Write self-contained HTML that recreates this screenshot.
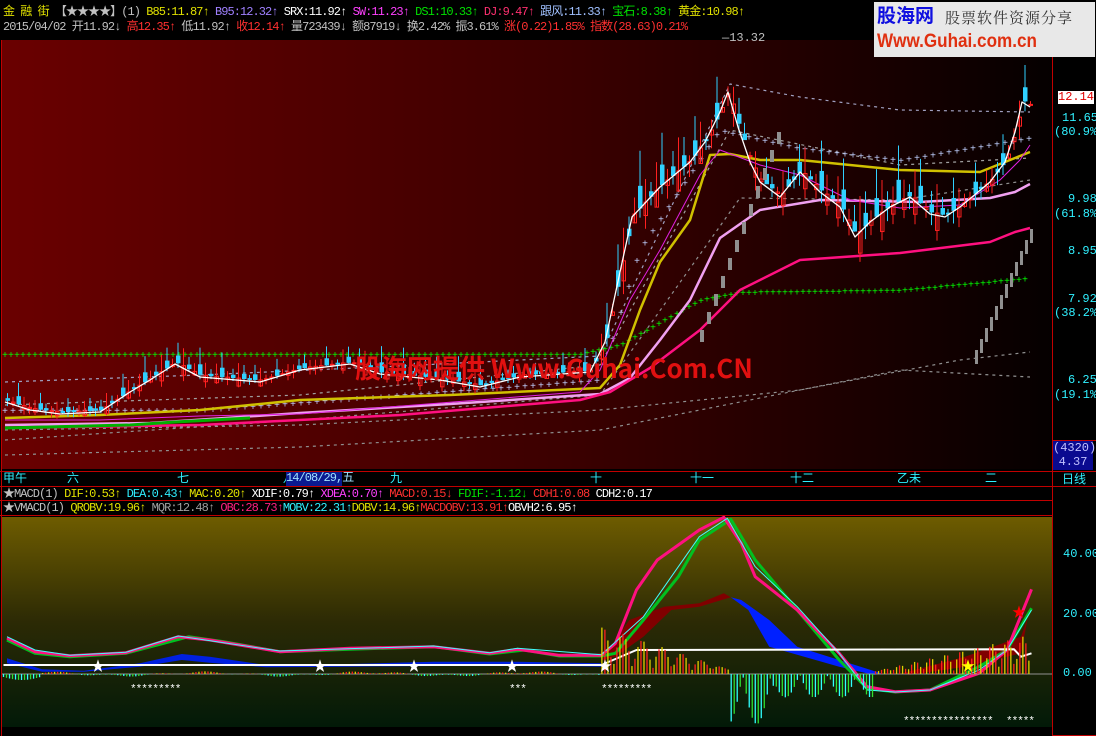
<!DOCTYPE html>
<html><head><meta charset="utf-8"><style>
*{margin:0;padding:0}
body{width:1096px;height:736px;background:#000;position:relative;overflow:hidden;font-family:"Liberation Mono","Noto Sans CJK SC",monospace;font-size:12px;color:#c0c0c0}
.t{position:absolute;white-space:nowrap;line-height:13px}
.h{letter-spacing:-0.95px}
.y{color:#e0e000}.b{color:#a080ff}.w{color:#fff}.m{color:#ff40ff}.g{color:#00e000}.r{color:#ff3030}.c{color:#30f0ff}.gr{color:#a0a0a0}.lb{color:#a0c0ff}
</style></head><body>
<div class="t h" style="left:3px;top:6px"><span class="y">金 融 街</span> 【★★★★】(1) <span class="y">B85:11.87↑</span> <span class="b">B95:12.32↑</span> <span class="w">SRX:11.92↑</span> <span class="m">SW:11.23↑</span> <span class="g">DS1:10.33↑</span> <span class="m" style="color:#ff3070">DJ:9.47↑</span> <span class="lb">跟风:11.33↑</span> <span class="g">宝石:8.38↑</span> <span class="y">黄金:10.98↑</span></div>
<div class="t h" style="left:3px;top:21px">2015/04/02 开11.92↓ <span class="r">高12.35↑</span> 低11.92↑ <span class="r">收12.14↑</span> 量723439↓ 额87919↓ 换2.42% 振3.61% <span class="r">涨(0.22)1.85% 指数(28.63)0.21%</span></div>

<svg width="1096" height="736" style="position:absolute;left:0;top:0" id="s">
<defs>
<linearGradient id="gm" x1="0" x2="1" y1="0" y2="0"><stop offset="0" stop-color="#6a0000"/><stop offset="0.55" stop-color="#3a0000"/><stop offset="1" stop-color="#050000"/></linearGradient>
<linearGradient id="gl" x1="0" x2="0" y1="0" y2="1"><stop offset="0" stop-color="#6e5c00"/><stop offset="0.5" stop-color="#2c2a05"/><stop offset="1" stop-color="#021a08"/></linearGradient>
</defs>
<rect x="2" y="40" width="1050" height="429" fill="url(#gm)"/>
<rect x="2" y="517" width="1050" height="210" fill="url(#gl)"/>
<g stroke="#c00000" stroke-width="1" fill="none">
<line x1="1052.5" y1="38" x2="1052.5" y2="736"/>
<line x1="0" y1="471.5" x2="1096" y2="471.5"/>
<line x1="0" y1="486.5" x2="1096" y2="486.5"/>
<line x1="1.5" y1="40" x2="1.5" y2="736"/>
<line x1="0" y1="500.5" x2="1052" y2="500.5"/>
<line x1="0" y1="515.5" x2="1052" y2="515.5"/>
<line x1="1052" y1="440.5" x2="1096" y2="440.5"/>
<line x1="1052" y1="735.5" x2="1096" y2="735.5"/>
</g>
<g id="main"></g>
<g id="low"></g>
</svg>

<div style="position:absolute;left:874px;top:2px;width:221px;height:55px;background:#e8e8e8"></div>
<div class="t" style="left:877px;top:6px;font-family:'Liberation Sans','Noto Sans CJK SC',sans-serif;font-weight:bold;font-size:19px;line-height:22px;color:#1010e0">股海网</div>
<div class="t" style="left:945px;top:9px;font-family:'Noto Serif CJK SC',serif;font-size:15px;line-height:18px;color:#333;letter-spacing:1px">股票软件资源分享</div>
<div class="t" style="left:877px;top:31px;font-family:'Liberation Sans',sans-serif;font-weight:bold;font-size:19px;line-height:22px;color:#e03010;transform:scaleX(0.9);transform-origin:0 0">Www.Guhai.com.cn</div>

<div class="t" style="left:355px;top:352px;font-family:'Noto Sans CJK SC',sans-serif;font-size:26px;line-height:32px;color:#e01010;font-weight:bold">股海网提供 Www.Guhai.Com.CN</div>
<div class="t" style="left:722px;top:32px;color:#c0c0c0">—13.32</div>

<div class="t c" style="left:3px;top:473px">甲午</div>
<div class="t c" style="left:67px;top:473px">六</div>
<div class="t c" style="left:177px;top:473px">七</div>
<div class="t c" style="left:283px;top:473px">八</div>
<div class="t h" style="left:286px;top:472px;width:56px;height:14px;background:#0a1a90;color:#a0e0ff">14/08/29,五</div>
<div class="t c" style="left:390px;top:473px">九</div>
<div class="t c" style="left:590px;top:473px">十</div>
<div class="t c" style="left:690px;top:473px">十一</div>
<div class="t c" style="left:790px;top:473px">十二</div>
<div class="t c" style="left:897px;top:473px">乙未</div>
<div class="t c" style="left:985px;top:473px">二</div>

<div class="t h" style="left:3px;top:488px">★MACD(1) <span class="y">DIF:0.53↑</span> <span class="c">DEA:0.43↑</span> <span class="y">MAC:0.20↑</span> <span class="w">XDIF:0.79↑</span> <span class="m">XDEA:0.70↑</span> <span class="r">MACD:0.15↓</span> <span class="g">FDIF:-1.12↓</span> <span class="r">CDH1:0.08</span> <span class="w">CDH2:0.17</span></div>
<div class="t h" style="left:3px;top:502px">★VMACD(1) <span class="y">QROBV:19.96↑</span> <span class="gr">MQR:12.48↑</span> <span style="color:#ff2080">OBC:28.73↑</span><span class="c">MOBV:22.31↑</span><span class="y">DOBV:14.96↑</span><span class="r">MACDOBV:13.91↑</span><span class="w">OBVH2:6.95↑</span></div>

<div style="position:absolute;left:1058px;top:91px;width:36px;height:13px;background:#fff;color:#e00000;line-height:13px;text-align:right">12.14</div>
<div class="t c" style="left:1062px;top:112px">11.65</div><div class="t c" style="left:1054px;top:126px">(80.9%)</div>
<div class="t c" style="left:1068px;top:193px">9.98</div><div class="t c" style="left:1054px;top:208px">(61.8%)</div>
<div class="t c" style="left:1068px;top:245px">8.95</div>
<div class="t c" style="left:1068px;top:293px">7.92</div><div class="t c" style="left:1054px;top:307px">(38.2%)</div>
<div class="t c" style="left:1068px;top:374px">6.25</div><div class="t c" style="left:1054px;top:389px">(19.1%)</div>
<div style="position:absolute;left:1053px;top:441px;width:40px;height:29px;background:#0a0a90;color:#c0c0ff;line-height:14px;text-align:center">(4320)<br>4.37</div>
<div class="t c" style="left:1062px;top:474px">日线</div>
<div class="t c" style="left:1063px;top:548px">40.00</div>
<div class="t c" style="left:1063px;top:608px">20.00</div>
<div class="t c" style="left:1063px;top:667px">0.00</div>

<script>
const NS="http://www.w3.org/2000/svg";
function el(p,t,a){const e=document.createElementNS(NS,t);for(const k in a)e.setAttribute(k,a[k]);p.appendChild(e);return e}
const M=document.getElementById('main'),L=document.getElementById('low');
function interp(pts,x){for(let i=0;i<pts.length-1;i++){if(x>=pts[i][0]&&x<=pts[i+1][0]){const t=(x-pts[i][0])/(pts[i+1][0]-pts[i][0]);return pts[i][1]+t*(pts[i+1][1]-pts[i][1])}}return pts[pts.length-1][1]}
function pl(g,pts,c,w,dash){el(g,'polyline',{points:pts.map(p=>p.join(',')).join(' '),fill:'none',stroke:c,'stroke-width':w,'stroke-dasharray':dash||'','stroke-linejoin':'round'})}
function dots(g,pts,c,x0,x1,st){for(let x=x0;x<=x1;x+=st){const y=interp(pts,x);el(g,'text',{x:x-3,y:y+4,fill:c,'font-size':'10','font-family':'Liberation Mono'}).textContent='+'}}
const P=[[5,400],[30,408],[60,412],[100,410],[130,390],[150,378],[175,362],[200,375],[260,380],[300,368],[350,362],[380,372],[440,378],[480,385],[520,375],[590,370],[605,340],[620,270],[632,215],[660,185],[690,160],[705,140],[720,110],[728,90],[738,125],[750,160],[760,180],[780,195],[800,170],[820,190],[840,205],[855,235],[870,220],[890,205],[910,195],[930,212],[945,215],[960,205],[990,180],[1005,160],[1015,130],[1022,100],[1030,105]];
pl(M,[[5,382],[200,375],[400,366],[600,356],[730,84],[800,97],[900,110],[1030,112]],'#a0a0c0',1.2,'3,4');
pl(M,[[5,405],[300,395],[600,365],[730,130],[900,165],[1030,158]],'#a0a0a0',1.2,'3,4');
pl(M,[[5,440],[300,420],[600,395],[740,198],[900,200],[1030,180]],'#909090',1.2,'3,4');
pl(M,[[5,455],[300,447],[600,430],[900,370],[1030,377]],'#909090',1.2,'3,4');
pl(M,[[5,430],[300,425],[600,410],[800,390],[960,360],[1030,352]],'#909090',1.2,'3,4');
dots(M,[[5,354],[580,354],[620,345],[700,300],[740,292],[900,290],[1030,278]],'#00ff00',5,1030,6);
dots(M,[[5,410],[200,410],[400,395],[600,380],[640,250],[720,130],[800,148],[900,160],[1030,138]],'#c0d0ff',5,1030,8);
pl(M,[[5,418],[100,415],[200,410],[300,400],[450,395],[600,388],[620,365],[640,310],[660,262],[690,220],[710,155],[730,154],[760,160],[800,160],[900,170],[980,172],[1010,160],[1030,152]],'#d0c000',2.5);
pl(M,[[5,425],[150,423],[300,413],[450,404],[600,394],[630,378],[660,340],[690,300],[720,238],[760,210],[820,200],[920,202],[990,198],[1015,192],[1030,184]],'#f0a0f0',2.5);
pl(M,[[5,428],[200,425],[400,415],[580,400],[610,392],[650,368],[700,330],[740,290],[800,260],[900,253],[990,242],[1015,232],[1030,228]],'#ff1080',2.5);
pl(M,[[5,420],[100,420],[200,416],[300,414],[580,392],[600,370],[630,300],[660,250],[700,175],[720,150],[760,165],[800,175],[850,200],[900,208],[960,205],[1000,180],[1020,160],[1030,145]],'#e020e0',1);
pl(M,[[5,428],[130,425],[175,422],[250,418]],'#00b000',3);
for(let x=6;x<=1030;x+=5.5){const c=interp(P,x);const n=Math.sin(x*1.7)*6+Math.cos(x*0.9)*4;const vol=(x>600?2.2:1);const o=c+n*vol;const up=o>c;const top=Math.min(o,c),bot=Math.max(o,c);const col=up?'#ff2020':'#30d0ff';el(M,'line',{x1:x+1.5,x2:x+1.5,y1:top-Math.abs(n)*1.5*vol-3,y2:bot+Math.abs(Math.cos(x))*6*vol,stroke:col,'stroke-width':1});el(M,'rect',{x:x,y:top,width:3.5,height:Math.max(bot-top,1),fill:up?'none':col,stroke:col,'stroke-width':1});}
pl(M,P.map(p=>[p[0],p[1]+2]),'#ffffff',1.3);
for(let i=0;i<12;i++){const x=700+i*7;el(M,'rect',{x:x,y:330-i*18,width:4,height:12,fill:'#909090'})}
for(let i=0;i<12;i++){const x=975+i*5;el(M,'rect',{x:x,y:350-i*11,width:3,height:14,fill:'#909090'})}
function T(a){return a.map(p=>[+(p[0]/1.43).toFixed(1),+(p[1]/3+510).toFixed(1)])}
const pink=T([[10,384],[50,425],[100,437],[180,428],[255,380],[300,390],[400,425],[500,415],[620,410],[700,430],[740,418],[800,436],[860,436],[880,400],[910,240],[940,150],[1000,60],[1035,22],[1060,100],[1080,200],[1140,300],[1200,430],[1240,530],[1280,545],[1330,540],[1400,490],[1440,420],[1475,238]]);
const grn=T([[10,390],[50,430],[100,440],[180,430],[270,380],[320,395],[400,425],[500,418],[620,410],[700,432],[750,420],[800,438],[860,438],[880,430],[920,330],[970,200],[1000,90],[1045,28],[1060,80],[1080,150],[1140,300],[1200,450],[1240,535],[1280,546],[1330,540],[1400,470],[1440,420],[1475,295]]);
el(L,'polygon',{points:T([[1045,262],[1070,300],[1100,410],[1150,440],[1200,470],[1250,495],[1260,490],[1200,450],[1140,410],[1100,330],[1060,270]]).map(p=>p.join(',')).join(' '),fill:'#0020ff'});
el(L,'polygon',{points:T([[900,330],[950,290],[1000,280],[1035,250],[1045,262],[1000,290],[960,300],[920,380],[880,440],[860,450]]).map(p=>p.join(',')).join(' '),fill:'#800000'});
el(L,'polygon',{points:T([[10,445],[60,478],[120,482],[200,460],[260,432],[300,440],[380,465],[500,462],[620,455],[740,455],[860,460],[860,470],[740,465],[620,468],[500,470],[380,472],[300,458],[260,450],[200,470],[120,485],[60,485],[10,460]]).map(p=>p.join(',')).join(' '),fill:'#0020e0'});
el(L,'polygon',{points:T([[1290,490],[1380,440],[1420,410],[1460,380],[1470,320],[1460,430],[1420,450],[1380,470],[1300,495]]).map(p=>p.join(',')).join(' '),fill:'#800000'});
pl(L,grn,'#00c020',3);pl(L,pink,'#ff1080',3);
pl(L,T([[10,380],[50,420],[100,436],[180,427],[255,378],[400,423],[620,408],[700,428],[740,415],[860,434],[920,320],[1000,80],[1040,25],[1080,170],[1140,290],[1200,430],[1240,540],[1280,546],[1330,540],[1400,480],[1440,420],[1475,300]]),'#40ffff',1);
pl(L,T([[5,465],[860,465],[910,420],[1450,418],[1460,440],[1475,430]]),'#ffffff',2);
el(L,'line',{x1:2,x2:1052,y1:674,y2:674,stroke:'#909090','stroke-width':1});
for(let zx=5;zx<1475;zx+=4.3){const x=zx/1.43;let h=0;
if(zx<60)h=-Math.sin(zx/20)*12-6;else if(zx<860)h=Math.sin(zx/37)*5+Math.sin(zx/11)*3;else if(zx<1045)h=Math.max(0,(1045-zx)/185*130*Math.abs(Math.sin(zx/9)))+12;else if(zx<1250)h=-Math.abs(Math.sin(zx/13))*(zx<1110?150:70);else h=(zx-1250)/225*110*Math.abs(Math.sin(zx/7))+8;
const hh=h/3;const c=hh>0?(Math.round(zx/4.3)%2?'#ff2020':'#e0d000'):(Math.round(zx/4.3)%2?'#30ffff':'#30e030');
el(L,'line',{x1:x,x2:x,y1:674,y2:674-hh,stroke:c,'stroke-width':1.3});}
[[97,'#fff'],[319,'#fff'],[413,'#fff'],[511,'#fff'],[604,'#fff'],[967,'#ff0'],[1018,'#f00']].forEach((s,i)=>{const y=i==6?612:666;el(L,'text',{x:s[0]-6,y:y+5,fill:s[1],'font-size':'14'}).textContent='★'});
[[130,'*********',692],[509,'***',692],[601,'*********',692],[903,'****************',724],[1006,'*****',724]].forEach(s=>{el(L,'text',{x:s[0],y:s[2],fill:'#fff','font-size':'11','font-family':'Liberation Mono','letter-spacing':'-1'}).textContent=s[1]});
</script>
</body></html>
